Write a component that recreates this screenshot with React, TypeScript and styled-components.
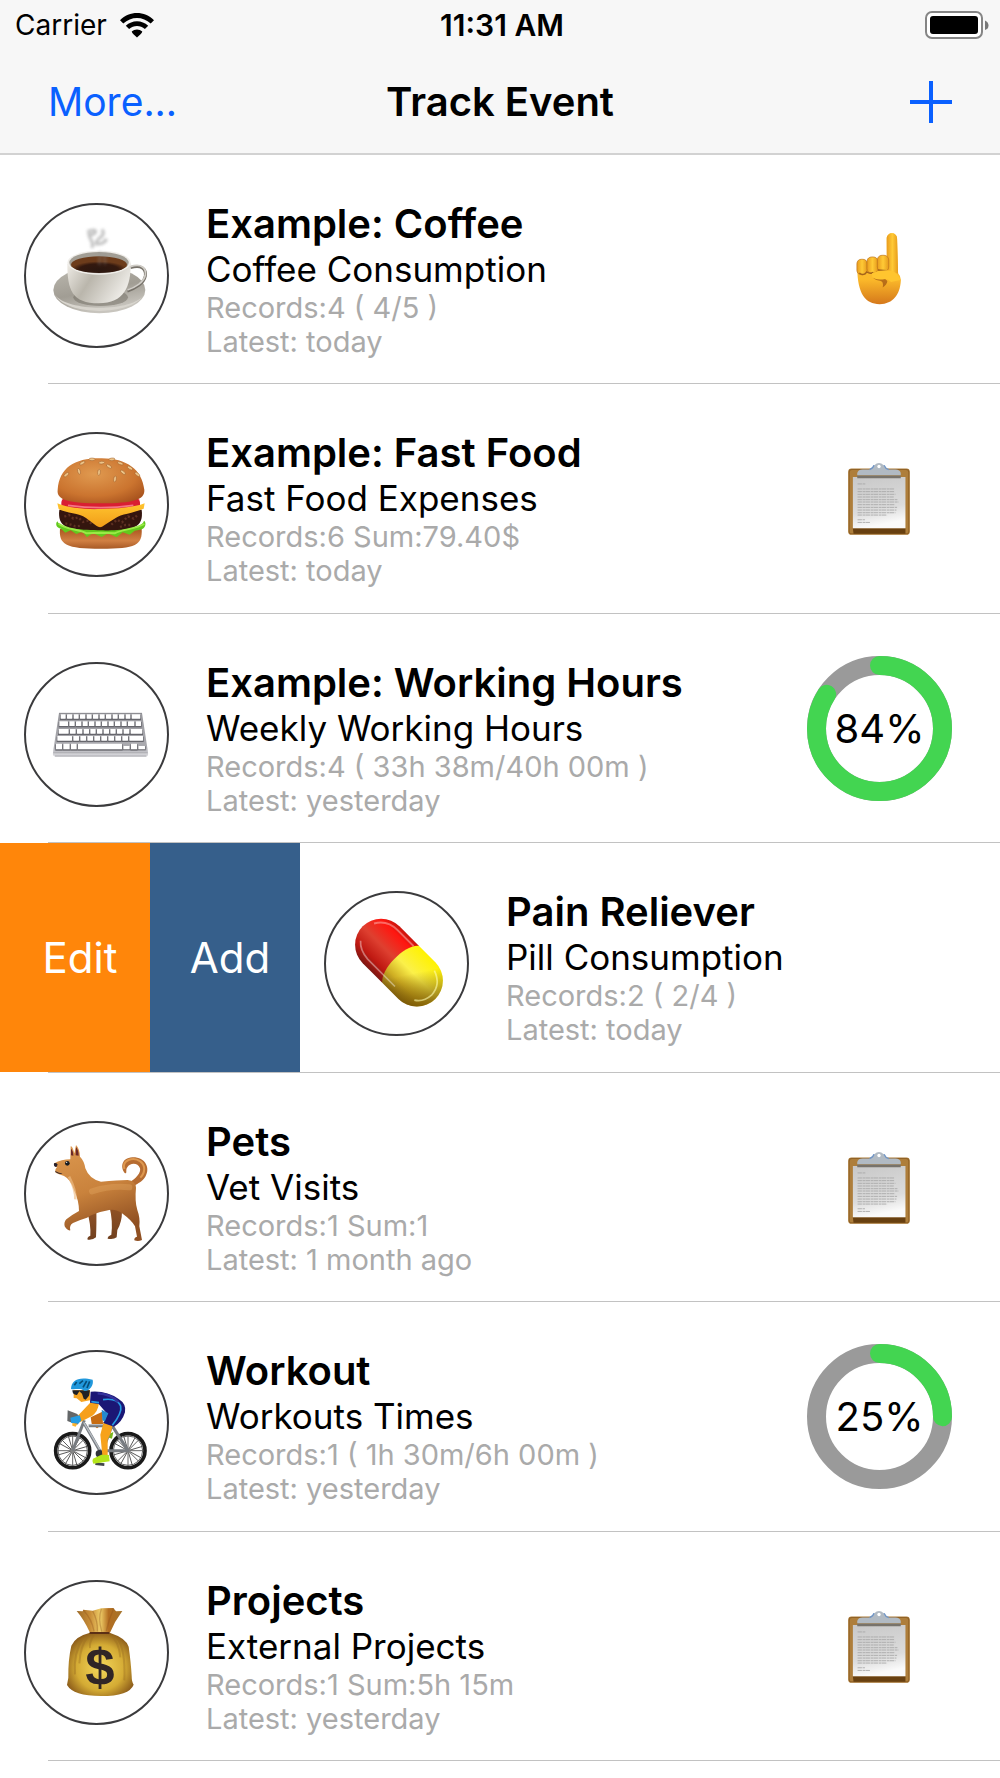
import React from 'react';
import styled, { createGlobalStyle } from 'styled-components';

const GlobalStyle = createGlobalStyle`
  *, *::before, *::after { box-sizing: border-box; }
  body {
    margin: 0;
    background: #fff;
    color: #000;
    font-family: Inter, "Liberation Sans", sans-serif;
  }
  button {
    font: inherit;
    border: 0;
    padding: 0;
    background: none;
    cursor: pointer;
  }
`;

const Header = styled.header`
  background: #f7f7f7;
  border-bottom: 2px solid #d2d2d2;
`;

const StatusBar = styled.div`
  display: grid;
  grid-template-columns: 1fr auto 1fr;
  align-items: center;
  height: 50px;
  padding: 0 11px 0 15px;
  font-size: 28px;
  line-height: 34px;
`;

const Carrier = styled.div`
  display: flex;
  align-items: center;
  gap: 13px;
`;

const Clock = styled.time`
  font-size: 30px;
  font-weight: 600;
`;

const StatusEnd = styled.div`
  display: flex;
  justify-content: flex-end;
`;

const NavBar = styled.nav`
  display: grid;
  grid-template-columns: 1fr auto 1fr;
  align-items: center;
  height: 103px;
  padding: 0 48px;
  font-size: 39px;
  line-height: 48px;
`;

const NavButton = styled.button<{ $end?: boolean }>`
  display: flex;
  justify-self: ${(p) => (p.$end ? 'end' : 'start')};
  color: #0a60ff;
`;

const NavTitle = styled.h1`
  margin: 0;
  font-size: 40px;
  font-weight: 600;
`;

const List = styled.ul`
  margin: 0;
  padding: 0;
  list-style: none;
  overflow: hidden;
`;

const Row = styled.li`
  display: flex;
  flex-direction: column;
  min-height: 229px;
  &:nth-child(even) { min-height: 230px; }
`;

const RowTrack = styled.div`
  display: flex;
  flex: 1;
`;

const RowBody = styled.div`
  display: flex;
  flex: 0 0 100%;
  align-items: flex-start;
  gap: 37px;
  padding: 0 48px 0 24px;
`;

const Separator = styled.div`
  height: 1px;
  margin-left: 48px;
  background: #c2c2c2;
`;

const SwipeAction = styled.button<{ $tone: string }>`
  flex: 0 0 150px;
  padding-left: 10px;
  background: ${(p) => p.$tone};
  color: #fff;
  font-size: 42px;
`;

const Avatar = styled.div`
  flex: none;
  width: 145px;
  height: 145px;
  margin-top: 48px;
  border: 2px solid #3b3b3d;
  border-radius: 50%;
  svg { display: block; width: 100%; height: 100%; }
`;

const Details = styled.div`
  flex: 1;
  min-width: 0;
  padding-top: 46px;
  white-space: nowrap;
`;

const EventName = styled.h2`
  margin: 0;
  font-size: 40px;
  font-weight: 600;
  line-height: 46px;
`;

const EventNote = styled.p`
  margin: 0;
  font-size: 35px;
  line-height: 44px;
`;

const Meta = styled.p`
  margin: 0;
  color: #aaa;
  font-size: 29px;
  line-height: 34px;
`;

const Accessory = styled.div`
  flex: none;
  align-self: center;
  display: grid;
  place-items: center;
  width: 145px;
  height: 145px;
  > * { grid-area: 1 / 1; }
`;

const GaugeLabel = styled.span`
  font-size: 40px;
`;

const WifiIcon = () => (
  <svg width="34" height="25" viewBox="0 0 34 25" aria-hidden="true">
    <path d="M0 7.2C9.5-2.4 24.500-2.400 34 7.200L30.700 10.500C23 3 11 3 3.300 10.500Z" />
    <path d="M5.800 12.800C12.100 6.700 21.900 6.700 28.200 12.800L24.900 16.100C20.400 11.900 13.600 11.900 9.100 16.100Z" />
    <path d="M11.700 18.600C14.700 15.900 19.300 15.900 22.300 18.600C22 20.500 19 22.500 17 24.500C15 22.500 12 20.500 11.700 18.600Z" />
  </svg>
);

const BatteryIcon = () => (
  <svg width="64" height="28" viewBox="0 0 64 28" aria-hidden="true">
    <rect x="1" y="1" width="56" height="26" rx="6" fill="#fff" stroke="#858585" strokeWidth="2" />
    <rect x="5" y="5" width="48" height="18" rx="3" />
    <path d="M60 9.500Q63.500 11 63.500 14.500Q63.500 18 60 19Z" fill="#777" />
  </svg>
);

const PlusIcon = () => (
  <svg width="42" height="42" viewBox="0 0 42 42" aria-hidden="true">
    <path d="M21 0V42M0 21H42" stroke="currentColor" strokeWidth="4" />
  </svg>
);

const CoffeeArt = () => (
  <svg viewBox="78 75 423 423" aria-hidden="true">
    <defs>
      <linearGradient id="cupBody" x1="0" x2="1" y2=".4">
        <stop stopColor="#efece6" /><stop offset=".45" stopColor="#bab6ac" /><stop offset="1" stopColor="#eceae5" />
      </linearGradient>
      <linearGradient id="saucer" x2=".4" y2="1">
        <stop stopColor="#bcb9b0" /><stop offset=".6" stopColor="#a19d94" /><stop offset="1" stopColor="#c8c5be" />
      </linearGradient>
      <radialGradient id="brew" cy=".8">
        <stop stopColor="#2a1710" /><stop offset=".7" stopColor="#34190f" /><stop offset="1" stopColor="#6d3c1b" />
      </radialGradient>
      <filter id="steam" x="-50%" y="-50%" width="200%" height="200%"><feGaussianBlur stdDeviation="4" /></filter>
    </defs>
    <ellipse cx="298" cy="330" rx="138" ry="70" fill="url(#saucer)" />
    <path d="M163 343C198 408 392 411 434 343C402 396 202 398 163 343Z" fill="#d8d5ce" />
    <ellipse cx="302" cy="352" rx="82" ry="26" fill="#6f6b62" opacity=".5" />
    <path d="M391 263C425 252 439 268 436 288C432 310 404 326 382 333" fill="none" stroke="#77726a" strokeWidth="9" />
    <path d="M391 260C425 249 439 265 436 285C432 307 404 323 382 330" fill="none" stroke="#d0cdc7" strokeWidth="5" />
    <path d="M202 252C202 330 216 370 296 370C372 370 393 320 392 250Z" fill="url(#cupBody)" />
    <ellipse cx="297" cy="248" rx="95" ry="36" fill="#f0eeea" />
    <ellipse cx="297" cy="248" rx="89" ry="32" fill="#a29e95" />
    <ellipse cx="297" cy="254" rx="84" ry="25" fill="url(#brew)" />
    <g fill="none" stroke="#8f8f8f" strokeWidth="9" opacity=".55" filter="url(#steam)">
      <path d="M262 155C300 140 288 169 267 163C268 181 284 182 276 204M306 148C322 171 283 175 289 192C320 192 323 171 313 183" />
      <path d="M300 213C301 228 298 240 298 255M316 216C312 232 316 240 315 254" opacity=".5" />
    </g>
  </svg>
);

const BurgerArt = () => (
  <svg viewBox="78 72 423 423" aria-hidden="true">
    <defs>
      <radialGradient id="bunTop" cx=".42" cy=".35" r=".75">
        <stop stopColor="#e09a50" /><stop offset=".65" stopColor="#cb742f" /><stop offset="1" stopColor="#a7521d" />
      </radialGradient>
      <linearGradient id="bunBase" x2="0" y2="1">
        <stop stopColor="#a9561f" /><stop offset=".6" stopColor="#d18043" /><stop offset="1" stopColor="#a85a26" />
      </linearGradient>
      <linearGradient id="cheese" x2="0" y2="1"><stop stopColor="#ffc52f" /><stop offset="1" stopColor="#f29c18" /></linearGradient>
    </defs>
    <path d="M180 356H425C428 405 407 416 303 416C198 416 176 404 180 356Z" fill="url(#bunBase)" />
    <path d="M178 299H425C431 349 407 364 303 364C198 364 172 350 178 299Z" fill="#34150e" />
    <path d="M193 320L207 315L220 326L235 322L249 336L265 332L278 345M334 344L351 329L366 337L384 319L401 326L414 314M196 340L213 344L226 349L244 347M360 351L376 345L393 345" fill="none" stroke="#5e3022" strokeWidth="7" strokeDasharray="6 7" />
    <path d="M172 334C165 342 169 354 183 356L196 368L212 361L229 372L247 365L261 382L278 369L305 381L324 370L350 382L368 367L389 374L404 362L420 359C438 356 440 337 432 332C425 358 350 362 303 361C248 360 183 358 172 334Z" fill="#62c91d" />
    <path d="M176 341C200 360 236 356 260 370L301 368L344 370C370 357 407 357 433 342" stroke="#9aea46" strokeWidth="6" fill="none" />
    <rect x="184" y="264" width="236" height="35" rx="14" fill="#d91f32" />
    <path d="M204 286Q303 300 400 286" stroke="#f47586" strokeWidth="5" fill="none" />
    <path d="M172 280C206 295 263 299 303 297C350 297 404 292 434 280L431 296C398 310 362 312 347 324Q326 337 306 350Q298 354 289 347L258 324C237 309 200 310 176 297Z" fill="url(#cheese)" />
    <path d="M173 239C178 173 224 144 302 145C379 144 426 178 433 239C435 270 400 279 303 280C207 279 169 271 173 239Z" fill="url(#bunTop)" />
    <g fill="#edc488" stroke="#9f602c" strokeWidth="1.500">
      {[[199, 194, 50], [237, 184, -15], [247, 159, 60], [276, 148, 90], [297, 187, 5], [305, 158, 85], [327, 169, -60], [345, 207, 10], [336, 148, 85], [369, 187, -50], [390, 174, -60], [361, 160, -70], [412, 193, -50]].map(([x, y, a]) => (
        <ellipse key={`${x}-${y}`} cx={x} cy={y} rx="4" ry="9" transform={`rotate(${a} ${x} ${y})`} />
      ))}
    </g>
  </svg>
);

const keyRows = [
  { y: 223, h: 13, keys: [182, 201, 221, 240, 260, 279, 299, 318, 338, 357, 377, 395], end: 421 },
  { y: 244, h: 14, keys: [178, 208, 228, 248, 267, 287, 306, 326, 345, 365, 384, 407], end: 423 },
  { y: 267, h: 14, keys: [176, 210, 231, 251, 271, 291, 311, 331, 351, 371, 392], end: 427 },
  { y: 288, h: 14, keys: [172, 220, 241, 262, 283, 304, 325, 346, 367, 388], end: 429 },
  { y: 311, h: 17, keys: [168, 190, 213, 234, 370, 393, 415], end: 435 },
];

const KeyboardArt = () => (
  <svg viewBox="78 72 423 423" aria-hidden="true">
    <defs>
      <linearGradient id="deck" x2="0" y2="1"><stop stopColor="#98989d" /><stop offset=".8" stopColor="#acacb1" /><stop offset=".9" stopColor="#c6c6cb" /><stop offset="1" stopColor="#dddde1" /></linearGradient>
    </defs>
    <path d="M177 219H426L444 337Q446 350 438 350H166Q157 350 159 337Z" fill="url(#deck)" />
    <path d="M177 220H426" stroke="#8c8c92" strokeWidth="3" />
    <path d="M160 338H443" stroke="#a2a2a8" strokeWidth="2" />
    <path d="M165 348H439" stroke="#a9a9ae" strokeWidth="3" />
    {keyRows.map((row) => row.keys.map((x, i) => {
      const w = (row.keys[i + 1] ?? row.end + 4) - x - 4;
      const arrow = row.y === 311 && (x === 370 || x === 415);
      return (
        <g key={`${row.y}-${x}`}>
          <rect x={x - 2} y={row.y + (arrow ? 8 : 2)} width={w + 4} height={row.h - (arrow ? 5 : -2)} fill="#66666c" />
          <rect x={x} y={row.y + (arrow ? 7 : 0)} width={w} height={row.h - (arrow ? 7 : 0)} rx="1" fill="#fff" />
        </g>
      );
    }))}
  </svg>
);

const PillArt = () => (
  <svg viewBox="978 189 423 423" aria-hidden="true">
    <defs>
      <linearGradient id="pillRed" x2="0" y2="1"><stop stopColor="#c9140c" /><stop offset=".15" stopColor="#ff1710" /><stop offset=".5" stopColor="#de4030" /><stop offset=".8" stopColor="#c01912" /><stop offset="1" stopColor="#7d1712" /></linearGradient>
      <linearGradient id="pillYellow" x2="0" y2="1"><stop stopColor="#fff200" /><stop offset=".45" stopColor="#fbf04a" /><stop offset=".75" stopColor="#cfae23" /><stop offset="1" stopColor="#8a6812" /></linearGradient>
      <linearGradient id="pillTip" x2="1" y2=".6"><stop offset=".5" stopColor="#725000" stopOpacity="0" /><stop offset="1" stopColor="#725000" stopOpacity=".75" /></linearGradient>
    </defs>
    <g transform="translate(1197 398) rotate(45)">
      <path d="M7-78H-76A78 78 0 0 0-76 78H7Z" fill="url(#pillRed)" />
      <path d="M7-78H76A78 78 0 0 1 76 78H7C-26 52-26-52 7-78Z" fill="url(#pillYellow)" />
      <path d="M7-78H76A78 78 0 0 1 76 78H7C-26 52-26-52 7-78Z" fill="url(#pillTip)" />
      <path d="M-128 35Q-110 56-74 59H42" fill="none" stroke="#fff" strokeWidth="5" opacity=".4" />
      <path d="M-136-30Q-116-66-72-66H-4" fill="none" stroke="#fff" strokeWidth="6" opacity=".35" />
      <path d="M92-58Q136-43 138 0Q136 32 112 47" fill="none" stroke="#fffdb0" strokeWidth="5" opacity=".6" />
    </g>
  </svg>
);

const DogArt = () => (
  <svg viewBox="78 69 423 423" aria-hidden="true">
    <defs>
      <linearGradient id="coat" x2=".3" y2="1"><stop stopColor="#dd9950" /><stop offset=".55" stopColor="#c9823c" /><stop offset="1" stopColor="#905022" /></linearGradient>
      <linearGradient id="farLeg" x2="0" y2="1"><stop stopColor="#915225" /><stop offset="1" stopColor="#70401f" /></linearGradient>
    </defs>
    <path d="M261 335L289 330Q290 365 288 412Q279 421 263 419Q260 411 271 407Q273 371 261 335Z" fill="url(#farLeg)" />
    <path d="M329 323L366 334Q366 367 352 390L350 412Q340 420 323 416Q322 409 334 404Q339 362 329 323Z" fill="url(#farLeg)" />
    <path d="M374 219C361 203 364 174 397 172C436 171 452 204 436 230C426 245 414 250 404 256L389 246C407 237 424 218 420 205C413 186 389 189 382 202C375 211 384 222 374 219Z" fill="#b66c31" />
    <path d="M373 207C365 181 399 169 421 184C437 196 436 218 421 233" fill="none" stroke="#de984f" strokeWidth="6" />
    <path d="M211 178L212 139Q217 136 223 160L228 135Q239 146 240 170Q253 183 256 205Q268 238 303 245Q353 240 383 240Q407 243 408 263Q404 304 412 330Q421 354 418 379L426 420Q414 426 403 421Q402 412 411 410L405 379Q395 361 366 340Q345 323 318 332Q281 339 261 353Q237 360 219 369Q207 376 211 391Q202 393 194 379Q191 367 199 358Q218 343 237 333Q237 302 222 270Q212 238 192 228Q175 222 167 218Q163 210 171 202Q163 200 163 190Q184 178 211 178Z" fill="url(#coat)" />
    <path d="M207 230Q228 271 226 298" fill="none" stroke="#f0bf87" strokeWidth="8" opacity=".65" />
    <path d="M276 274Q333 256 388 262" fill="none" stroke="#eab36d" strokeWidth="18" strokeLinecap="round" opacity=".3" />
    <path d="M213 146Q220 152 220 167L213 166ZM228 141Q236 150 236 167L227 166Z" fill="#6b2828" />
    <path d="M162 190Q171 187 173 194L169 201Q160 201 162 190M166 213Q177 221 187 219Q183 227 166 216Z" fill="#28202b" />
    <circle cx="202" cy="190" r="7" fill="#171c22" /><circle cx="200" cy="187" r="2" fill="#fff" />
  </svg>
);

const Wheel = ({ x }: { x: number }) => (
  <g transform={`translate(${x} 362)`}>
    <circle r="51" fill="none" stroke="#1a1a1a" strokeWidth="11" />
    <circle r="44" fill="none" stroke="#666" strokeWidth="3" />
    {Array.from({ length: 16 }, (_, i) => (
      <path key={i} d="M0 0V-45" stroke="#4a4a4a" strokeWidth="2.500" transform={`rotate(${i * 22.5 + (i % 2) * 6})`} />
    ))}
    <circle r="7" fill="#868686" />
  </g>
);

const CyclistArt = () => (
  <svg viewBox="78 66 423 423" aria-hidden="true">
    <Wheel x={218} /><Wheel x={384} />
    <path d="M272 262L307 245L309 282L291 295L275 281Z" fill="#c76c12" />
    <path d="M327 312L340 306L336 326L327 323Z" fill="#78b51b" />
    <path d="M218 362L253 271M253 281L302 367M266 287H335L307 367M332 280L384 362H306" fill="none" stroke="#777b80" strokeWidth="9" strokeLinejoin="round" />
    <path d="M251 277L299 358M267 284H331" fill="none" stroke="#b8bec4" strokeWidth="4" />
    <path d="M203 241L230 251L244 262L232 284L202 273Z" fill="#646769" />
    <circle cx="298" cy="371" r="11" fill="#303338" />
    <path d="M286 401L313 404" stroke="#42464b" strokeWidth="8" />
    <path d="M221 181L270 181V211L244 216L230 205L221 204Z" fill="#f7a421" />
    <path d="M217 181H270L267 197L257 209L251 206L246 191L238 184L231 195Q221 195 218 187Z" fill="#202125" />
    <path d="M213 177C214 150 236 139 278 149C282 165 270 182 254 183C240 173 225 180 213 177Z" fill="#2198dc" />
    <path d="M223 166L230 156M238 161L249 152M249 172L260 153M269 154L261 174" stroke="#064e79" strokeWidth="5" />
    <path d="M272 217L297 219Q294 245 276 258L241 276L230 261Z" fill="#f6a01b" />
    <path d="M211 263L239 256L244 271L235 281L214 279Z" fill="#239ce4" />
    <path d="M217 279L232 281L227 290L217 287Z" fill="#fbb32f" />
    <path d="M311 275L337 283Q337 304 323 329L323 375L307 376L301 314Z" fill="#f7a21a" />
    <path d="M279 386L304 374L327 375L329 394L280 401Q275 393 279 386Z" fill="#b4e51b" />
    <path d="M272 185Q320 181 356 207Q380 222 375 247Q366 277 342 290L310 279L322 252L296 222L270 218Z" fill="#1b1775" />
    <path d="M309 209Q351 203 362 228Q367 248 337 286M274 215L297 218" fill="none" stroke="#269be4" strokeWidth="5" />
    <path d="M305 239L325 250L314 275L307 270Z" fill="#238acf" />
    <path d="M293 190Q332 192 355 216" fill="none" stroke="#34329c" strokeWidth="7" />
  </svg>
);

const DollarMark = styled.text`
  font-family: "Liberation Sans", sans-serif;
  font-size: 158px;
  font-weight: 700;
  text-anchor: middle;
  fill: #302526;
`;

const MoneyArt = () => (
  <svg viewBox="78 66 423 423" aria-hidden="true">
    <defs>
      <radialGradient id="sack" cx=".5" cy=".55" r=".6"><stop stopColor="#f4d75b" /><stop offset=".6" stopColor="#d4ab34" /><stop offset="1" stopColor="#815016" /></radialGradient>
      <linearGradient id="sackNeck"><stop stopColor="#9d6a28" /><stop offset=".3" stopColor="#c98e38" /><stop offset=".52" stopColor="#edcb66" /><stop offset=".7" stopColor="#b36d20" /><stop offset="1" stopColor="#a5742c" /></linearGradient>
    </defs>
    <path d="M230 153L248 154L250 149L278 152L304 145L340 144L348 154L367 153Q344 184 330 218L270 218Q252 179 230 153Z" fill="url(#sackNeck)" />
    <path d="M270 218H329Q378 234 386 260Q393 310 395 347Q395 365 401 374Q388 408 303 408Q220 408 201 375L205 353Q204 300 214 257Q226 229 270 218Z" fill="url(#sack)" />
    <path d="M250 232Q219 280 225 343M263 230Q241 258 238 310M351 232Q377 270 373 361M331 225Q357 244 361 292M281 226Q267 250 270 264" fill="none" stroke="#9b6d21" strokeWidth="6" opacity=".4" />
    <path d="M250 150Q276 178 282 214M278 153Q294 183 292 214M304 146Q294 176 305 215M341 145Q326 180 319 213" fill="none" stroke="#8b5119" strokeWidth="4" opacity=".35" />
    <path d="M269 219H328" stroke="#5b3015" strokeWidth="6" />
    <DollarMark x="300" y="374">$</DollarMark>
  </svg>
);

const HandIcon = () => (
  <svg width="145" height="145" viewBox="80 52 433 433" role="img" aria-label="Tap to record">
    <defs>
      <linearGradient id="skin" x2="0" y2="1"><stop stopColor="#ffc936" /><stop offset=".65" stopColor="#fbb92a" /><stop offset="1" stopColor="#d5781b" /></linearGradient>
      <linearGradient id="finger"><stop stopColor="#e99b1d" /><stop offset=".5" stopColor="#ffca36" /><stop offset="1" stopColor="#e69a1b" /></linearGradient>
    </defs>
    <path d="M318 177C318 155 349 155 349 177L352 280Q362 290 360 305C357 343 338 371 297 372C254 372 231 341 230 265L319 255Z" fill="url(#skin)" />
    <path d="M318 177C318 155 349 155 349 177L352 281L318 271Z" fill="url(#finger)" />
    <g fill="url(#finger)" stroke="#bd741b" strokeWidth="2">
      <rect x="229" y="238" width="31" height="46" rx="13" />
      <rect x="259" y="231" width="33" height="49" rx="14" />
      <rect x="290" y="226" width="34" height="49" rx="14" />
    </g>
    <path d="M236 279Q249 289 258 276Q270 283 278 277M292 270L318 272" fill="none" stroke="#a4631b" strokeWidth="4" />
    <path d="M277 292Q311 291 320 303Q319 314 306 322Q310 304 298 302Q281 300 277 292Z" fill="#9d5112" opacity=".7" />
    <path d="M274 280Q300 268 332 272Q354 280 359 300L331 306Q322 294 306 298Q282 300 275 291Z" fill="#ffc52f" />
  </svg>
);

const ClipboardIcon = () => (
  <svg width="145" height="145" viewBox="80 740 433 433" role="img" aria-label="Open records">
    <defs>
      <linearGradient id="paper" x2=".2" y2="1"><stop stopColor="#c8c8c8" /><stop offset=".7" stopColor="#dcdcdc" /><stop offset="1" stopColor="#fafafa" /></linearGradient>
    </defs>
    <rect x="203" y="867" width="184" height="198" rx="10" fill="#ae7e3b" />
    <rect x="206" y="870" width="178" height="192" rx="8" fill="none" stroke="#916226" strokeWidth="3" />
    <path d="M217 1045H374V1062H219Z" fill="#684010" />
    <path d="M217 892H374V1045H217Z" fill="url(#paper)" />
    <path d="M230 888H360V896H230Z" fill="#77736c" />
    <path d="M230 887V880Q233 870 246 870H266Q278 866 281 857Q295 844 309 857Q313 867 324 870H344Q358 871 360 880V887Z" fill="#b1bac3" />
    <path d="M267 870Q278 866 280 857M310 857Q314 867 324 870" stroke="#6f94c5" strokeWidth="4" fill="none" />
    <circle cx="295" cy="861" r="5" fill="#fff" />
    <g stroke="#a6a6a6" strokeWidth="2.500" strokeDasharray="13 2 8 1">
      <path d="M231 913H254M231 928H340M231 936H341M231 944H344M231 952H339M231 960H350M231 967H353M231 975H343M231 983H349M231 991H347M231 999H344M231 1006H319M231 1020H253M231 1028H268" />
    </g>
  </svg>
);

const RADIUS = 63;
const CIRCUMFERENCE = 2 * Math.PI * RADIUS;

const Gauge = ({ percent }: { percent: number }) => (
  <>
    <svg width="145" height="145" viewBox="0 0 145 145" aria-hidden="true">
      <g fill="none" strokeWidth="19" transform="rotate(-90 72.500 72.500)">
        <circle cx="72.500" cy="72.500" r={RADIUS} stroke="#9a9a9a" />
        <circle
          cx="72.500"
          cy="72.500"
          r={RADIUS}
          stroke="#43d551"
          strokeLinecap="round"
          strokeDasharray={`${(CIRCUMFERENCE * percent) / 100} ${CIRCUMFERENCE}`}
        />
      </g>
    </svg>
    <GaugeLabel>{percent}%</GaugeLabel>
  </>
);

interface TrackedEvent {
  name: string;
  note: string;
  records: string;
  latest: string;
  art: React.ReactNode;
  accessory?: React.ReactNode;
  swiped?: boolean;
}

const events: TrackedEvent[] = [
  { name: 'Example: Coffee', note: 'Coffee Consumption', records: '4 ( 4/5 )', latest: 'today', art: <CoffeeArt />, accessory: <HandIcon /> },
  { name: 'Example: Fast Food', note: 'Fast Food Expenses', records: '6 Sum:79.40$', latest: 'today', art: <BurgerArt />, accessory: <ClipboardIcon /> },
  { name: 'Example: Working Hours', note: 'Weekly Working Hours', records: '4 ( 33h 38m/40h 00m )', latest: 'yesterday', art: <KeyboardArt />, accessory: <Gauge percent={84} /> },
  { name: 'Pain Reliever', note: 'Pill Consumption', records: '2 ( 2/4 )', latest: 'today', art: <PillArt />, swiped: true },
  { name: 'Pets', note: 'Vet Visits', records: '1 Sum:1', latest: '1 month ago', art: <DogArt />, accessory: <ClipboardIcon /> },
  { name: 'Workout', note: 'Workouts Times', records: '1 ( 1h 30m/6h 00m )', latest: 'yesterday', art: <CyclistArt />, accessory: <Gauge percent={25} /> },
  { name: 'Projects', note: 'External Projects', records: '1 Sum:5h 15m', latest: 'yesterday', art: <MoneyArt />, accessory: <ClipboardIcon /> },
];

const EventRow = ({ event }: { event: TrackedEvent }) => (
  <Row>
    <RowTrack>
      {event.swiped && (
        <>
          <SwipeAction type="button" $tone="#ff860a">Edit</SwipeAction>
          <SwipeAction type="button" $tone="#365f8b">Add</SwipeAction>
        </>
      )}
      <RowBody>
        <Avatar>{event.art}</Avatar>
        <Details>
          <EventName>{event.name}</EventName>
          <EventNote>{event.note}</EventNote>
          <Meta>Records:{event.records}</Meta>
          <Meta>Latest: {event.latest}</Meta>
        </Details>
        {event.accessory && <Accessory>{event.accessory}</Accessory>}
      </RowBody>
    </RowTrack>
    <Separator />
  </Row>
);

export default function App() {
  return (
    <>
      <GlobalStyle />
      <Header>
        <StatusBar>
          <Carrier>Carrier <WifiIcon /></Carrier>
          <Clock>11:31 AM</Clock>
          <StatusEnd><BatteryIcon /></StatusEnd>
        </StatusBar>
        <NavBar>
          <NavButton type="button">More...</NavButton>
          <NavTitle>Track Event</NavTitle>
          <NavButton type="button" $end aria-label="Add event"><PlusIcon /></NavButton>
        </NavBar>
      </Header>
      <main>
        <List>
          {events.map((event) => <EventRow key={event.name} event={event} />)}
        </List>
      </main>
    </>
  );
}
